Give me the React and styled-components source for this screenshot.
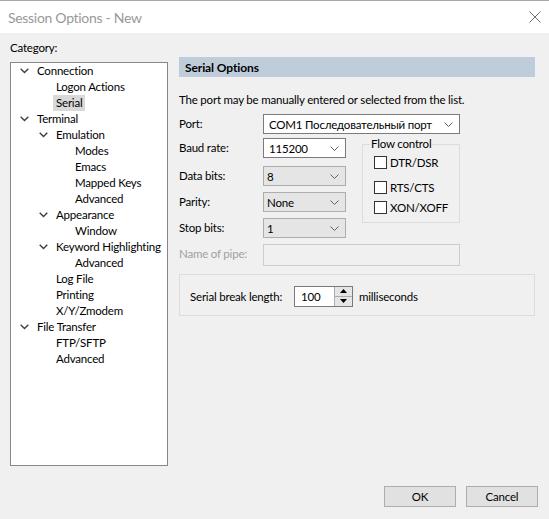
import React from "react";
import styled, { createGlobalStyle } from "styled-components";

const GlobalStyle = createGlobalStyle`
  html, body {
    margin: 0;
    padding: 0;
    background: #f0f0f0;
  }
  body {
    font-family: Lato, "Liberation Sans", sans-serif;
    font-size: 11.5px;
    letter-spacing: -0.2px;
    color: #000;
  }
`;

const Window = styled.div`
  width: 549px;
  height: 519px;
  display: flex;
  flex-direction: column;
  background: #f0f0f0;
  box-sizing: border-box;
  border-top: 1px solid #a8a8a8;
  overflow: hidden;
`;

const TitleBar = styled.div`
  height: 32px;
  background: #ffffff;
  display: flex;
  align-items: center;
  justify-content: space-between;
  padding: 0 7px 0 8px;
  flex-shrink: 0;
`;

const Title = styled.span`
  font-size: 14px;
  letter-spacing: -0.3px;
  color: #999999;
`;

const CloseButton = styled.div`
  width: 14px;
  height: 14px;
  display: flex;
  align-items: center;
  justify-content: center;
`;

const Main = styled.div`
  flex: 1;
  display: flex;
  padding: 0 14px 0 10px;
  gap: 11px;
  min-height: 0;
`;

const LeftColumn = styled.div`
  width: 158px;
  display: flex;
  flex-direction: column;
`;

const CategoryLabel = styled.div`
  margin-top: 7px;
  height: 16px;
  line-height: 16px;
  margin-bottom: 6px;
`;

const Tree = styled.ul`
  flex: 1;
  list-style: none;
  margin: 0;
  padding: 0;
  background: #ffffff;
  border: 1px solid #828790;
`;

const TreeRow = styled.li`
  height: 16px;
  display: flex;
  align-items: center;
  padding-left: ${(p) => 26 + p.$level * 19}px;
  position: relative;
`;

const Chevron = styled.svg`
  position: absolute;
  left: ${(p) => 9 + p.$level * 19}px;
  top: 5px;
`;

const TreeText = styled.span`
  line-height: 16px;
  padding: 0 3px;
  margin-left: -3px;
  background: ${(p) => (p.$selected ? "#d9d9d9" : "transparent")};
  white-space: nowrap;
`;

const RightPanel = styled.div`
  flex: 1;
  display: flex;
  flex-direction: column;
  padding-top: 24px;
`;

const Header = styled.div`
  height: 20px;
  background: #bfcddb;
  display: flex;
  align-items: center;
  padding-left: 6px;
  font-weight: bold;
  font-size: 12px;
  letter-spacing: -0.1px;
`;

const Description = styled.div`
  margin-top: 16px;
  height: 14px;
  line-height: 14px;
  white-space: nowrap;
`;

const FieldGrid = styled.div`
  margin-top: 7px;
  display: grid;
  grid-template-columns: 84px 83px 16px 98px;
  grid-template-rows: 24px 28px 26px 26px 26px 22px;
  align-items: start;
`;

const Label = styled.div`
  grid-column: 1;
  grid-row: ${(p) => p.$row};
  height: 20px;
  line-height: 20px;
  color: ${(p) => (p.$disabled ? "#a0a0a0" : "#000")};
  white-space: nowrap;
`;

const Select = styled.div`
  grid-column: ${(p) => (p.$wide ? "2 / 5" : "2")};
  grid-row: ${(p) => p.$row};
  height: 20px;
  box-sizing: border-box;
  border: 1px solid ${(p) => (p.$editable ? "#7a7a7a" : "#adadad")};
  background: ${(p) => (p.$editable ? "#ffffff" : "#e5e5e5")};
  display: flex;
  align-items: center;
  justify-content: space-between;
  padding: 0 6px 0 ${(p) => (p.$editable ? 5 : 3)}px;
  white-space: nowrap;
`;

const PipeInput = styled.div`
  grid-column: 2 / 5;
  grid-row: 6;
  height: 22px;
  box-sizing: border-box;
  border: 1px solid #cccccc;
  background: #f0f0f0;
`;

const FlowGroup = styled.fieldset`
  grid-column: 4;
  grid-row: 2 / 6;
  margin: 0;
  margin-top: -1px;
  padding: 3px 0 0 11px;
  height: 86px;
  box-sizing: border-box;
  border: 1px solid #dcdcdc;
  display: flex;
  flex-direction: column;
`;

const Legend = styled.legend`
  padding: 0 1px;
  margin-left: -4px;
  line-height: 14px;
`;

const CheckRow = styled.label`
  display: flex;
  align-items: center;
  gap: 3px;
  height: 13px;
  margin-top: ${(p) => p.$mt}px;
`;

const Box = styled.span`
  width: 13px;
  height: 13px;
  box-sizing: border-box;
  border: 1px solid #333333;
  background: #ffffff;
  flex-shrink: 0;
`;

const BreakGroup = styled.div`
  margin-top: 8px;
  height: 42px;
  box-sizing: border-box;
  border: 1px solid #dcdcdc;
  display: flex;
  align-items: center;
  padding: 2px 0 0 10px;
  width: 356px;
`;

const BreakLabel = styled.span`
  width: 104px;
  white-space: nowrap;
`;

const Spin = styled.div`
  width: 59px;
  height: 21px;
  box-sizing: border-box;
  border: 1px solid #7a7a7a;
  background: #ffffff;
  display: flex;
`;

const SpinValue = styled.span`
  flex: 1;
  padding-left: 6px;
  line-height: 19px;
`;

const SpinButtons = styled.div`
  width: 17px;
  display: flex;
  flex-direction: column;
  border-left: 1px solid #adadad;
`;

const SpinButton = styled.div`
  flex: 1;
  background: #e5e5e5;
  display: flex;
  align-items: center;
  justify-content: center;
  border-bottom: ${(p) => (p.$top ? "1px solid #adadad" : "none")};
`;

const Unit = styled.span`
  margin-left: 6px;
`;

const Footer = styled.div`
  flex-shrink: 0;
  display: flex;
  justify-content: flex-end;
  gap: 10px;
  padding: 20px 11px 12px 0;
`;

const Button = styled.div`
  width: 72px;
  height: 21px;
  box-sizing: border-box;
  border: 1px solid #adadad;
  background: #e1e1e1;
  display: flex;
  align-items: center;
  justify-content: center;
`;

const ArrowDown = () => (
  <svg width="9" height="5" viewBox="0 0 9 5">
    <path d="M0.5 0.5 L4.5 4.5 L8.5 0.5" fill="none" stroke="#606060" strokeWidth="1" />
  </svg>
);

const treeItems = [
  { text: "Connection", level: 0, open: true },
  { text: "Logon Actions", level: 1 },
  { text: "Serial", level: 1, selected: true },
  { text: "Terminal", level: 0, open: true },
  { text: "Emulation", level: 1, open: true },
  { text: "Modes", level: 2 },
  { text: "Emacs", level: 2 },
  { text: "Mapped Keys", level: 2 },
  { text: "Advanced", level: 2 },
  { text: "Appearance", level: 1, open: true },
  { text: "Window", level: 2 },
  { text: "Keyword Highlighting", level: 1, open: true },
  { text: "Advanced", level: 2 },
  { text: "Log File", level: 1 },
  { text: "Printing", level: 1 },
  { text: "X/Y/Zmodem", level: 1 },
  { text: "File Transfer", level: 0, open: true },
  { text: "FTP/SFTP", level: 1 },
  { text: "Advanced", level: 1 },
];

const selects = [
  { label: "Baud rate:", value: "115200", row: 2, editable: true },
  { label: "Data bits:", value: "8", row: 3 },
  { label: "Parity:", value: "None", row: 4 },
  { label: "Stop bits:", value: "1", row: 5 },
];

export default function App() {
  return (
    <>
      <GlobalStyle />
      <Window>
        <TitleBar>
          <Title>Session Options - New</Title>
          <CloseButton>
            <svg width="12" height="12" viewBox="0 0 12 12">
              <path d="M0.5 0.5 L11.5 11.5 M11.5 0.5 L0.5 11.5" stroke="#707070" strokeWidth="1" />
            </svg>
          </CloseButton>
        </TitleBar>
        <Main>
          <LeftColumn>
            <CategoryLabel>Category:</CategoryLabel>
            <Tree>
              {treeItems.map((item, i) => (
                <TreeRow key={i} $level={item.level}>
                  {item.open && (
                    <Chevron $level={item.level} width="9" height="6" viewBox="0 0 9 6">
                      <path d="M0.7 0.7 L4.5 4.5 L8.3 0.7" fill="none" stroke="#404040" strokeWidth="1.4" />
                    </Chevron>
                  )}
                  <TreeText $selected={item.selected}>{item.text}</TreeText>
                </TreeRow>
              ))}
            </Tree>
          </LeftColumn>
          <RightPanel>
            <Header>Serial Options</Header>
            <Description>The port may be manually entered or selected from the list.</Description>
            <FieldGrid>
              <Label $row={1}>Port:</Label>
              <Select $row={1} $wide $editable>
                <span>COM1 Последовательный порт</span>
                <ArrowDown />
              </Select>
              {selects.map((s) => (
                <React.Fragment key={s.label}>
                  <Label $row={s.row}>{s.label}</Label>
                  <Select $row={s.row} $editable={s.editable}>
                    <span>{s.value}</span>
                    <ArrowDown />
                  </Select>
                </React.Fragment>
              ))}
              <FlowGroup>
                <Legend>Flow control</Legend>
                <CheckRow $mt={2}>
                  <Box />
                  DTR/DSR
                </CheckRow>
                <CheckRow $mt={12}>
                  <Box />
                  RTS/CTS
                </CheckRow>
                <CheckRow $mt={7}>
                  <Box />
                  XON/XOFF
                </CheckRow>
              </FlowGroup>
              <Label $row={6} $disabled>
                Name of pipe:
              </Label>
              <PipeInput />
            </FieldGrid>
            <BreakGroup>
              <BreakLabel>Serial break length:</BreakLabel>
              <Spin>
                <SpinValue>100</SpinValue>
                <SpinButtons>
                  <SpinButton $top>
                    <svg width="7" height="4" viewBox="0 0 7 4">
                      <path d="M0 4 L3.5 0 L7 4 Z" fill="#000" />
                    </svg>
                  </SpinButton>
                  <SpinButton>
                    <svg width="7" height="4" viewBox="0 0 7 4">
                      <path d="M0 0 L3.5 4 L7 0 Z" fill="#000" />
                    </svg>
                  </SpinButton>
                </SpinButtons>
              </Spin>
              <Unit>milliseconds</Unit>
            </BreakGroup>
          </RightPanel>
        </Main>
        <Footer>
          <Button>OK</Button>
          <Button>Cancel</Button>
        </Footer>
      </Window>
    </>
  );
}
